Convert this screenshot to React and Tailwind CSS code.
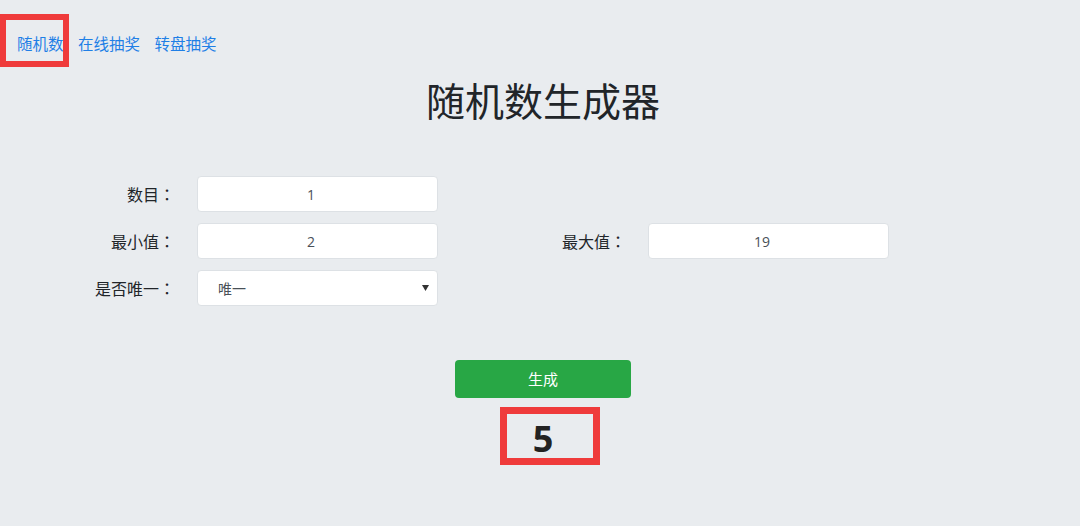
import { useState } from 'react';

const font = { fontFamily: '"Open Sans", "Noto Sans CJK SC", sans-serif' };
const colonFont = { fontFamily: '"Noto Sans CJK TC", sans-serif' };

function Label({ text }) {
  return (
    <span className="w-[175px] text-right text-[16px] text-[#212529]">
      {text}
      <span style={colonFont}>：</span>
    </span>
  );
}

function Field({ label, value }) {
  return (
    <div className="flex items-center w-[451px]">
      <Label text={label} />
      <input
        readOnly
        value={value}
        className="ml-[22px] w-[241px] h-[36px] bg-white border border-[#dde1e5] rounded pr-[13px] text-center text-[14px] text-[#495057] outline-none"
      />
    </div>
  );
}

export default function App() {
  const [result] = useState(5);

  return (
    <div className="relative h-[526px] bg-[#e9ecef] overflow-hidden" style={font}>
      <nav className="flex gap-[14.5px] pl-[17px] pt-[33px] text-[15.5px] leading-[22px] text-[#1f7fe6]">
        <a href="#">随机数</a>
        <a href="#">在线抽奖</a>
        <a href="#">转盘抽奖</a>
      </nav>

      <h1 className="mt-[22px] pl-[6px] text-center text-[39px] leading-[48px] text-[#212529]">随机数生成器</h1>

      <div className="mt-[51px] flex flex-col gap-[11px]">
        <div className="flex">
          <Field label="数目" value="1" />
        </div>
        <div className="flex">
          <Field label="最小值" value="2" />
          <Field label="最大值" value="19" />
        </div>
        <div className="flex">
          <div className="flex items-center w-[451px]">
            <Label text="是否唯一" />
            <div className="relative ml-[22px] w-[241px] h-[36px]">
              <select className="appearance-none w-full h-full bg-white border border-[#dde1e5] rounded pl-[20px] text-[14px] text-[#495057] outline-none">
                <option>唯一</option>
                <option>不唯一</option>
              </select>
              <svg className="absolute right-[9px] top-[15px] pointer-events-none" width="7" height="6" viewBox="0 0 7 6">
                <path d="M0 0h7L3.5 6z" fill="#333" />
              </svg>
            </div>
          </div>
        </div>
      </div>

      <div className="mt-[54px] pl-[6px] flex flex-col items-center">
        <button className="w-[176px] h-[38px] bg-[#28a745] rounded text-white text-[15px]">生成</button>
        <div className="mt-[19px] text-[36px] leading-[44px] font-bold text-[#222]">{result}</div>
      </div>

      <div className="absolute left-0 top-[14px] w-[69px] h-[53px] border-[6px] border-[#ef3b3b]" />
      <div className="absolute left-[500px] top-[407px] w-[100px] h-[58px] border-[7px] border-[#ef3b3b]" />
    </div>
  );
}
